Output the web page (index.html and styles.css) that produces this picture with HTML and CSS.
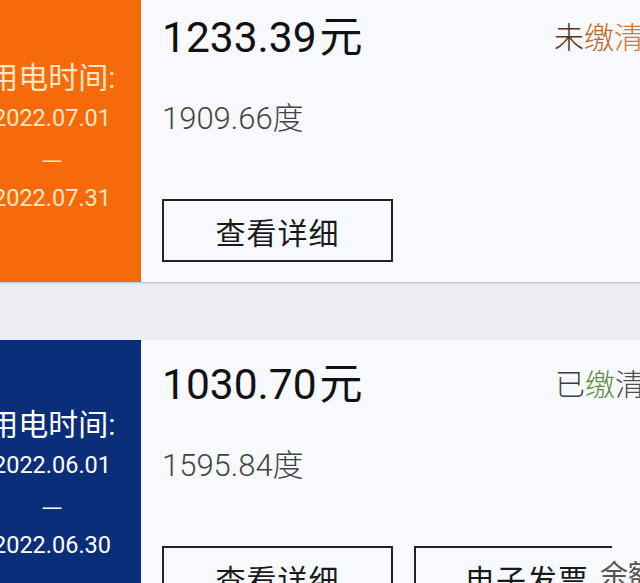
FILE: index.html
```html
<!DOCTYPE html>
<html lang="zh-CN">
<head>
<meta charset="utf-8">
<title>电费账单</title>
<link rel="stylesheet" href="styles.css">
</head>
<body>
<div class="list">
  <div class="card">
    <div class="period period-orange">
      <div class="period-label">用电时间:</div>
      <div class="period-date">2022.07.01</div>
      <div class="period-date period-dash">—</div>
      <div class="period-date">2022.07.31</div>
    </div>
    <div class="main">
      <div class="head">
        <div class="amount">1233.39<span class="unit">元</span></div>
        <div class="status"><span class="s-unpaid-1">未</span><span class="s-unpaid-2">缴</span><span class="s-unpaid-3">清</span></div>
      </div>
      <div class="usage">1909.66度</div>
      <div class="actions">
        <div class="btn">查看详细</div>
      </div>
    </div>
  </div>
  <div class="card">
    <div class="period period-blue">
      <div class="period-label">用电时间:</div>
      <div class="period-date">2022.06.01</div>
      <div class="period-date period-dash">—</div>
      <div class="period-date">2022.06.30</div>
    </div>
    <div class="main">
      <div class="head">
        <div class="amount">1030.70<span class="unit">元</span></div>
        <div class="status"><span class="s-paid-1">已</span><span class="s-paid-2">缴</span><span class="s-paid-3">清</span></div>
      </div>
      <div class="usage">1595.84度</div>
      <div class="actions">
        <div class="btn">查看详细</div>
        <div class="btn btn-invoice">电子发票<span class="badge">余额</span></div>
      </div>
    </div>
  </div>
</div>
</body>
</html>
```

FILE: styles.css
```css
html, body {
  margin: 0;
  padding: 0;
}
body {
  background: #eceef3;
  overflow: hidden;
  font-family: Roboto, "Noto Sans CJK SC", sans-serif;
  color: #1a1a1a;
}
.list {
  display: flex;
  flex-direction: column;
  gap: 58px;
  margin-top: -7px;
  margin-left: -37px;
  width: 681px;
}
.card {
  display: flex;
  height: 289px;
  background: #f8f9fc;
  box-shadow: 0 1px 2px rgba(0, 0, 0, 0.22);
}
.period {
  flex: none;
  width: 178px;
  display: flex;
  flex-direction: column;
  align-items: center;
  padding-top: 65px;
  box-sizing: border-box;
}
.period-orange {
  background: #f56b0b;
  color: #fde6c3;
}
.period-blue {
  background: #0b2e7b;
  color: #ffffff;
}
.period-label {
  font-size: 30px;
  line-height: 40px;
}
.period-date {
  font-size: 23.5px;
  line-height: 40px;
}
.period-dash {
  font-family: "Noto Sans CJK SC", sans-serif;
  font-weight: 400;
}
.main {
  flex: 1;
  padding: 17px 0 0 21px;
  position: relative;
}
.head {
  display: flex;
  align-items: center;
  height: 50px;
}
.amount {
  font-size: 42.5px;
  line-height: 50px;
  color: #111;
}
.unit {
  margin-left: 3px;
  font-family: "Noto Sans CJK SC", sans-serif;
  font-size: 43px;
}
.status {
  margin-left: auto;
  font-size: 30px;
  line-height: 50px;
  font-family: "Noto Sans CJK SC", sans-serif;
  font-weight: 300;
  white-space: nowrap;
}
.s-unpaid-1 { color: #5e3416; }
.s-unpaid-2 { color: #b8672a; }
.s-unpaid-3 { color: #cf7a30; }
.s-paid-1 { color: #3d3d3d; }
.s-paid-2 { color: #5d8e42; }
.s-paid-3 { color: #4e4e4e; }
.usage {
  margin-top: 39px;
  font-size: 31px;
  line-height: 40px;
  font-weight: 300;
  color: #444;
}
.actions {
  display: flex;
  gap: 21px;
  margin-top: 60px;
}
.btn {
  position: relative;
  flex: none;
  width: 231px;
  height: 63px;
  box-sizing: border-box;
  border: 2px solid #222;
  display: flex;
  align-items: center;
  justify-content: center;
  font-family: "Noto Sans CJK SC", sans-serif;
  font-size: 30px;
  color: #1a1a1a;
  letter-spacing: 1px;
}
.btn-invoice {
  padding-right: 5px;
}
.badge {
  position: absolute;
  left: 184px;
  top: -2px;
  width: 60px;
  height: 50px;
  line-height: 54px;
  font-size: 28px;
  color: #555;
  background: linear-gradient(to right, transparent 12px, #f8f9fc 12px);
  letter-spacing: 0;
}
```
